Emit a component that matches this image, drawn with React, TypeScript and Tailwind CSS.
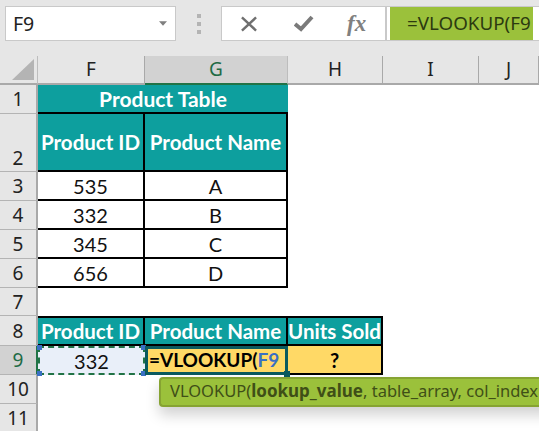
const sans = "font-['Noto_Sans','Open_Sans',sans-serif]";

const columns = [
  { label: 'F', active: false },
  { label: 'G', active: true },
  { label: 'H', active: false },
  { label: 'I', active: false },
  { label: 'J', active: false },
];

const RowHead = ({ n, active, bottom }: { n: number; active?: boolean; bottom?: boolean }) => (
  <div
    className={`flex justify-center ${bottom ? 'items-end' : 'items-center'} border-b border-b-[#b4b4b4] text-[19px] leading-[26px] ${sans} ${
      active
        ? 'bg-[#d2d2d2] text-[#1f6b45] border-r-2 border-r-[#217346]'
        : 'bg-[#e6e6e6] text-[#222] border-r-2 border-r-[#a9a9a9]'
    }`}
  >
    {n}
  </div>
);

const Blank = () => <div className="bg-white" />;

const Cell = ({ children }: { children: string }) => (
  <div className="flex items-center justify-center border-r-2 border-b-2 border-black bg-white pt-px text-[20px] text-[#111]">
    {children}
  </div>
);

const Head = ({ children, top }: { children: string; top?: boolean }) => (
  <div
    className={`flex items-center justify-center whitespace-nowrap border-r-2 border-b-2 border-black bg-[#0d9f9e] text-[20.5px] font-bold text-white ${
      top ? 'border-t-2' : ''
    }`}
  >
    {children}
  </div>
);

const App = () => {
  return (
    <div className="relative h-[431px] w-[539px] overflow-hidden bg-white font-['Lato',sans-serif]">
      {/* formula bar */}
      <div className="flex h-[56px] items-start bg-[#e6e6e6] pl-[5px] pt-[6px]">
        <div className={`flex h-[35px] w-[171px] items-center justify-between border border-[#c9c9c9] bg-white pl-[7px] pr-[8px] text-[19.5px] text-[#222] ${sans}`}>
          <span>F9</span>
          <svg width="8" height="5" viewBox="0 0 9 5"><path d="M0 0h9L4.5 5z" fill="#7f7f7f" /></svg>
        </div>
        <div className="flex h-[35px] w-[45px] flex-col items-center justify-center gap-[4px]">
          <span className="h-[4px] w-[4px] bg-[#b4b4b4]" />
          <span className="h-[4px] w-[4px] bg-[#b4b4b4]" />
          <span className="h-[4px] w-[4px] bg-[#b4b4b4]" />
        </div>
        <div className="flex h-[35px] w-[165px] items-center border border-[#c9c9c9] bg-white pl-[18px]">
          <svg width="18" height="16" viewBox="0 0 19 17">
            <path d="M2 1.5l15 14M17 1.5L2 15.5" stroke="#6f6f6f" strokeWidth="2.6" fill="none" />
          </svg>
          <svg className="ml-[36px]" width="20" height="17" viewBox="0 0 20 17">
            <path d="M1 9l6 5L18 2" stroke="#7a7a7a" strokeWidth="4" fill="none" />
          </svg>
          <span className="ml-[33px] font-['Liberation_Serif',serif] text-[23px] font-bold italic leading-none text-[#808080]">fx</span>
        </div>
        <div className="flex h-[35px] flex-1 border-y border-l border-[#c9c9c9] bg-white pl-[3px] pr-[6px]">
          <div className={`flex-1 overflow-hidden whitespace-nowrap bg-[#9bc13b] pl-[17px] text-[18.8px] leading-[33px] text-[#2c3a10] ${sans}`}>
            =VLOOKUP(F9
          </div>
        </div>
      </div>

      {/* sheet */}
      <div className="grid grid-cols-[38px_107px_143px_95px_96px_60px] grid-rows-[29px_29px_58px_29px_29px_29px_29px_28px_30px_29px_29px_28px]">
        <div className="relative border-r border-b-2 border-r-[#bdbdbd] border-b-[#a9a9a9] bg-[#e6e6e6]">
          <svg className="absolute bottom-[3px] right-[3px]" width="22" height="21" viewBox="0 0 22 21">
            <path d="M22 0v21H0z" fill="#b4b4b4" />
          </svg>
        </div>
        {columns.map((c) => (
          <div
            key={c.label}
            className={`flex items-center justify-center border-r text-[19px] ${sans} ${
              c.active
                ? 'border-b-2 border-b-[#217346] border-r-[#bdbdbd] bg-[#d2d2d2] text-[#1f6b45]'
                : 'border-b-2 border-b-[#a9a9a9] border-r-[#a9a9a9] bg-[#e6e6e6] text-[#222]'
            }`}
          >
            {c.label}
          </div>
        ))}

        <RowHead n={1} />
        <div className="col-span-2 flex items-center justify-center border-b-2 border-black bg-[#0d9f9e] text-[21px] font-bold text-white">
          Product Table
        </div>
        <Blank /><Blank /><Blank />

        <RowHead n={2} bottom />
        <Head>Product ID</Head>
        <Head>Product Name</Head>
        <Blank /><Blank /><Blank />

        <RowHead n={3} />
        <Cell>535</Cell>
        <Cell>A</Cell>
        <Blank /><Blank /><Blank />

        <RowHead n={4} />
        <Cell>332</Cell>
        <Cell>B</Cell>
        <Blank /><Blank /><Blank />

        <RowHead n={5} />
        <Cell>345</Cell>
        <Cell>C</Cell>
        <Blank /><Blank /><Blank />

        <RowHead n={6} />
        <Cell>656</Cell>
        <Cell>D</Cell>
        <Blank /><Blank /><Blank />

        <RowHead n={7} />
        <Blank /><Blank /><Blank /><Blank /><Blank />

        <RowHead n={8} />
        <Head top>Product ID</Head>
        <Head top>Product Name</Head>
        <Head top>Units Sold</Head>
        <Blank /><Blank />

        <RowHead n={9} active />
        <div className="relative flex items-center justify-center border-2 border-dashed border-[#217346] bg-[#e9eff9] text-[20px] text-[#111]">
          332
          <span className="absolute -left-[3px] -top-[3px] h-[5px] w-[5px] bg-[#3a6fc4]" />
          <span className="absolute -right-[3px] -top-[3px] h-[5px] w-[5px] bg-[#3a6fc4]" />
          <span className="absolute -left-[3px] -bottom-[3px] h-[5px] w-[5px] bg-[#3a6fc4]" />
          <span className="absolute -right-[3px] -bottom-[3px] h-[5px] w-[5px] bg-[#3a6fc4]" />
        </div>
        <div className="relative flex items-center whitespace-nowrap border-[3px] border-[#0b5a5e] bg-[#ffd966] pl-[1px] text-[19px] font-bold text-black">
          =VLOOKUP(<span className="text-[#3a6fc4]">F9</span>
          <span className="absolute -bottom-[5px] -right-[5px] h-[6px] w-[6px] bg-[#0b5a5e]" />
        </div>
        <div className="flex items-center justify-center border-r-2 border-b-2 border-black bg-[#ffd966] text-[20px] font-bold text-black">?</div>
        <Blank /><Blank />

        <RowHead n={10} />
        <Blank /><Blank /><Blank /><Blank /><Blank />

        <RowHead n={11} />
        <Blank /><Blank /><Blank /><Blank /><Blank />
      </div>

      {/* argument tooltip */}
      <div className={`absolute left-[159px] top-[377px] h-[30px] w-[400px] whitespace-nowrap rounded-l-[4px] border-y-2 border-l-2 border-y-[#86a332] border-l-[#86a332] bg-[#9bc13b] pl-[9px] text-[16.5px] leading-[24px] text-[#3f4f17] shadow-[0_8px_14px_rgba(0,0,0,0.18)] ${sans}`}>
        VLOOKUP(<b className="text-[17px]">lookup_value</b>, table_array, col_index
      </div>
    </div>
  );
};

export default App;
